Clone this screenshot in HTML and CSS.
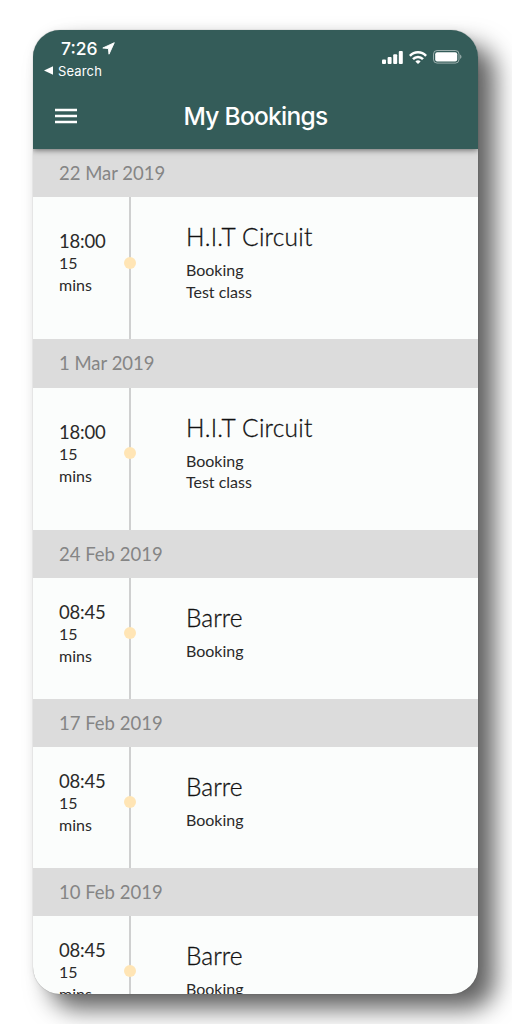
FILE: index.html
```
<!DOCTYPE html>
<html lang="en">

<head>
    <meta charset="UTF-8">
    <meta name="viewport" content="width=device-width, initial-scale=1.0">
    <title>My Bookings</title>
    <link rel="stylesheet" href="styles.css">
</head>

<body>
    <div class="phone">
        <header>
            <div class="status-bar">
                <div class="status-left">
                    <div class="clock">
                        <span>7:26</span>
                        <svg width="13" height="13" viewBox="0 0 13 13"><path d="M12.3 0.7 L0.8 6 L6.4 6.6 L7 12.2 Z" fill="#fff" stroke="#fff" stroke-width="0.9" stroke-linejoin="round"/></svg>
                    </div>
                    <a href="#" class="back">
                        <svg width="9" height="9" viewBox="0 0 9 9"><path d="M0 4.5 L9 0.3 V8.7 Z" fill="#fff"/></svg>
                        <span>Search</span>
                    </a>
                </div>
                <div class="status-right">
                    <svg width="21" height="13" viewBox="0 0 21 13" fill="#fff">
                        <rect x="0" y="8.4" width="4" height="4.6" rx="1"/>
                        <rect x="5.6" y="6" width="4" height="7" rx="1"/>
                        <rect x="11.2" y="3.2" width="4" height="9.8" rx="1"/>
                        <rect x="16.8" y="0" width="4" height="13" rx="1"/>
                    </svg>
                    <svg width="18" height="13" viewBox="0 0 18 13" fill="none" stroke="#fff" stroke-width="2.5">
                        <path d="M0.9 4.9 C5.4 0.1 12.6 0.1 17.1 4.9"/>
                        <path d="M4 8.2 C6.8 5.2 11.2 5.2 14 8.2"/>
                        <path d="M9 13 L6.4 10.4 C7.8 9 10.2 9 11.6 10.4 Z" fill="#fff" stroke="none"/>
                    </svg>
                    <svg width="29" height="14" viewBox="0 0 29 14">
                        <rect x="0.5" y="0.5" width="25.5" height="12.6" rx="3.6" fill="none" stroke="#fff" stroke-opacity="0.5"/>
                        <rect x="2.2" y="2.2" width="22" height="9.2" rx="2" fill="#fff"/>
                        <path d="M27.2 4.6 C28.9 5.4 28.9 8.2 27.2 9 Z" fill="#fff" fill-opacity="0.55"/>
                    </svg>
                </div>
            </div>
            <nav>
                <button class="menu" aria-label="Menu">
                    <svg width="22" height="16" viewBox="0 0 22 16" stroke="#fff" stroke-width="2.5">
                        <path d="M0 2 H22 M0 8 H22 M0 14 H22"/>
                    </svg>
                </button>
                <h1>My Bookings</h1>
            </nav>
        </header>

        <main>
            <section>
                <h2>22 Mar 2019</h2>
                <div class="booking tall">
                    <div class="when">
                        <p class="time">18:00</p>
                        <p>15<br>mins</p>
                    </div>
                    <div class="timeline"><span class="dot"></span></div>
                    <div class="details">
                        <h3>H.I.T Circuit</h3>
                        <p>Booking</p>
                        <p>Test class</p>
                    </div>
                </div>
            </section>

            <section>
                <h2>1 Mar 2019</h2>
                <div class="booking tall">
                    <div class="when">
                        <p class="time">18:00</p>
                        <p>15<br>mins</p>
                    </div>
                    <div class="timeline"><span class="dot"></span></div>
                    <div class="details">
                        <h3>H.I.T Circuit</h3>
                        <p>Booking</p>
                        <p>Test class</p>
                    </div>
                </div>
            </section>

            <section>
                <h2>24 Feb 2019</h2>
                <div class="booking">
                    <div class="when">
                        <p class="time">08:45</p>
                        <p>15<br>mins</p>
                    </div>
                    <div class="timeline"><span class="dot"></span></div>
                    <div class="details">
                        <h3 class="short">Barre</h3>
                        <p>Booking</p>
                    </div>
                </div>
            </section>

            <section>
                <h2>17 Feb 2019</h2>
                <div class="booking">
                    <div class="when">
                        <p class="time">08:45</p>
                        <p>15<br>mins</p>
                    </div>
                    <div class="timeline"><span class="dot"></span></div>
                    <div class="details">
                        <h3 class="short">Barre</h3>
                        <p>Booking</p>
                    </div>
                </div>
            </section>

            <section>
                <h2>10 Feb 2019</h2>
                <div class="booking">
                    <div class="when">
                        <p class="time">08:45</p>
                        <p>15<br>mins</p>
                    </div>
                    <div class="timeline"><span class="dot"></span></div>
                    <div class="details">
                        <h3 class="short">Barre</h3>
                        <p>Booking</p>
                    </div>
                </div>
            </section>
        </main>
    </div>
</body>

</html>
```
FILE: styles.css
```
* {
    margin: 0;
    padding: 0;
    box-sizing: border-box;
}

body {
    height: 1024px;
    padding: 30px 34px 30px 33px;
    overflow: hidden;
    background-color: #fff;
    font-family: Lato, "Liberation Sans", sans-serif;
    color: #2a2a2a;
}

.phone {
    height: 964px;
    border-radius: 27px;
    overflow: hidden;
    background-color: #fbfdfc;
    box-shadow: 17px 15px 24px rgba(0, 0, 0, 0.62), 0 0 1px rgba(0, 0, 0, 0.4), 0 0 10px rgba(0, 0, 0, 0.05);
}

/* Header */
header {
    position: relative;
    height: 119px;
    background-color: #345c59;
    color: #fff;
    font-family: Inter, "Liberation Sans", sans-serif;
    box-shadow: 0 1px 6px rgba(0, 0, 0, 0.55);
}

.status-bar {
    display: flex;
    justify-content: space-between;
    height: 56px;
    padding: 7px 16px 0 11px;
}

.clock {
    display: flex;
    align-items: center;
    gap: 4px;
    height: 23px;
    padding-left: 17px;
    font-size: 17.5px;
    font-weight: 500;
}

.back {
    display: flex;
    align-items: center;
    gap: 5px;
    height: 21px;
    color: #fff;
    font-size: 13px;
    letter-spacing: 0.15px;
    text-decoration: none;
}

.status-right {
    display: flex;
    align-items: center;
    gap: 6px;
    height: 40px;
}

nav {
    position: relative;
    display: flex;
    align-items: center;
    justify-content: center;
    height: 60px;
}

.menu {
    position: absolute;
    left: 22px;
    display: flex;
    border: none;
    background: none;
}

h1 {
    font-size: 24.5px;
    font-weight: 500;
    letter-spacing: -0.7px;
}

/* Booking list */
h2 {
    height: 48.3px;
    padding-left: 26px;
    line-height: 48px;
    background-color: #dcdcdc;
    color: #858585;
    font-size: 18.5px;
    font-weight: 400;
}

.booking {
    display: grid;
    grid-template-columns: 90px 14px 1fr;
    height: 120.8px;
}

.booking.tall {
    height: 142.2px;
}

.when,
.timeline {
    display: flex;
    flex-direction: column;
    justify-content: center;
    padding-bottom: 11px;
}

.when {
    padding-left: 26px;
}

.when p {
    font-size: 16px;
    line-height: 22px;
}

.when .time {
    padding-top: 1px;
    font-size: 18.5px;
    line-height: 22px;
    letter-spacing: -0.2px;
}

.timeline {
    align-items: center;
    background: linear-gradient(#cfd0d0, #cfd0d0) 6px 0 / 2px 100% no-repeat;
}

.dot {
    width: 12px;
    height: 12px;
    border-radius: 50%;
    background-color: #ffe5b5;
}

.details {
    padding: 24px 0 0 49px;
}

.details p {
    font-size: 16px;
    line-height: 21.5px;
}

h3 {
    margin-bottom: 7px;
    color: #111;
    font-size: 24.5px;
    font-weight: 300;
    line-height: 31px;
    letter-spacing: 0.25px;
    -webkit-text-stroke: 0.3px #111;
}

h3.short {
    letter-spacing: 0;
}
```
